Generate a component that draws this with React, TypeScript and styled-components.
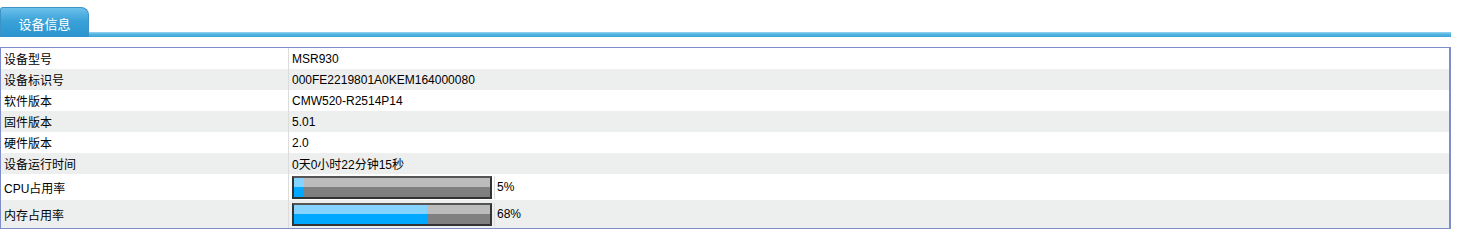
import React from "react";
import styled, { createGlobalStyle } from "styled-components";

const GlobalStyle = createGlobalStyle`
  body {
    margin: 0;
    background: #fff;
    font-family: "Liberation Sans", "Noto Sans CJK SC", Arial, sans-serif;
    font-size: 12px;
    color: #000;
  }
`;

const rows = [
  { label: "设备型号", value: "MSR930" },
  { label: "设备标识号", value: "000FE2219801A0KEM164000080" },
  { label: "软件版本", value: "CMW520-R2514P14" },
  { label: "固件版本", value: "5.01" },
  { label: "硬件版本", value: "2.0" },
  { label: "设备运行时间", value: "0天0小时22分钟15秒" },
];

const usage = [
  { label: "CPU占用率", percent: 5 },
  { label: "内存占用率", percent: 68 },
];

const Page = styled.div`
  width: 1451px;
  padding-top: 5px;
`;

const TabBar = styled.div`
  display: flex;
  align-items: flex-end;
  height: 32px;
`;

const Tab = styled.div`
  width: 89px;
  height: 30px;
  border-radius: 3px 8px 0 0;
  border: 1px solid #3c93c6;
  border-bottom: none;
  box-sizing: border-box;
  background: linear-gradient(to bottom, #6cc0ea 0%, #3aa2d8 45%, #2b94cf 100%);
  color: #fff;
  font-size: 13px;
  display: flex;
  align-items: center;
  justify-content: center;
  padding-top: 2px;
`;

const Line = styled.div`
  flex: 1;
  height: 5px;
  background: linear-gradient(to bottom, #9ad6f2 0%, #58b6e2 40%, #3ca4d8 100%);
`;

const Table = styled.div`
  margin-top: 10px;
  border: 1px solid #7f8ccc;
  border-right-width: 2px;
  box-sizing: border-box;
`;

const Row = styled.div<{ $alt: boolean; $tall?: number }>`
  display: grid;
  grid-template-columns: 288px 1fr;
  height: ${(p) => p.$tall ?? 21}px;
  background: ${(p) => (p.$alt ? "#edeeee" : "#fff")};
`;

const Label = styled.div`
  display: flex;
  align-items: center;
  padding-left: 3px;
  border-right: 1px solid #dcdcdc;
`;

const Value = styled.div`
  display: flex;
  align-items: center;
  padding-left: 3px;
`;

const BarCell = styled.div`
  display: flex;
  align-items: center;
  padding-left: 3px;
  width: 202px;
  border-right: 1px solid #dcdcdc;
`;

const Bar = styled.div`
  position: relative;
  width: 196px;
  height: 19px;
  border: 2px solid #333;
  border-top-color: #555;
  background: linear-gradient(to bottom, #bcbcbc 0%, #bcbcbc 48%, #808080 48%, #808080 100%);
`;

const Fill = styled.div`
  height: 100%;
  background: linear-gradient(to bottom, #85d3ff 0%, #85d3ff 48%, #00a8ff 48%, #00a8ff 100%);
`;

const Percent = styled.div`
  display: flex;
  align-items: center;
  padding-left: 2px;
`;

export default function App() {
  return (
    <Page>
      <GlobalStyle />
      <TabBar>
        <Tab>设备信息</Tab>
        <Line />
      </TabBar>
      <Table>
        {rows.map((r, i) => (
          <Row key={r.label} $alt={i % 2 === 1}>
            <Label>{r.label}</Label>
            <Value>{r.value}</Value>
          </Row>
        ))}
        {usage.map((u, i) => (
          <Row key={u.label} $alt={i % 2 === 1} $tall={i === 0 ? 26 : 28}>
            <Label>{u.label}</Label>
            <Value style={{ paddingLeft: 0 }}>
              <BarCell>
                <Bar>
                  <Fill style={{ width: `${u.percent}%` }} />
                </Bar>
              </BarCell>
              <Percent>{u.percent}%</Percent>
            </Value>
          </Row>
        ))}
      </Table>
    </Page>
  );
}
